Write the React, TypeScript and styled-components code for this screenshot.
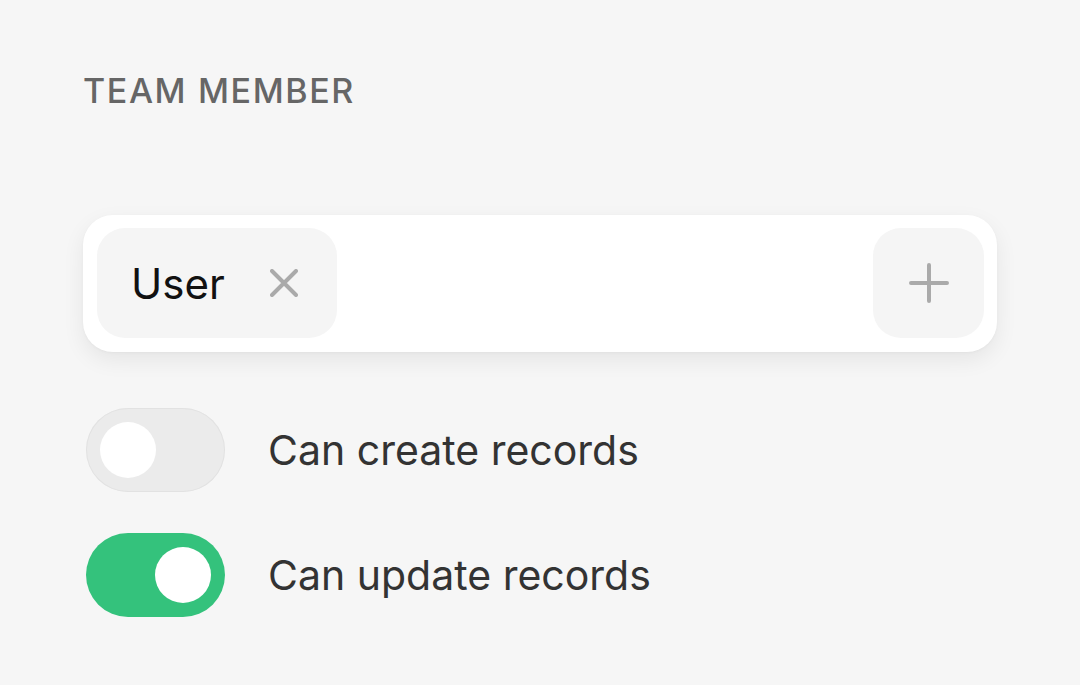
import React from 'react';
import styled, { createGlobalStyle } from 'styled-components';

const GlobalStyle = createGlobalStyle`
  html, body {
    margin: 0;
    padding: 0;
    background: #f6f6f6;
    font-family: Inter, "Noto Sans", "Liberation Sans", sans-serif;
    -webkit-font-smoothing: antialiased;
  }
`;

interface Permission {
  label: string;
  enabled: boolean;
}

const permissions: Permission[] = [
  { label: 'Can create records', enabled: false },
  { label: 'Can update records', enabled: true },
];

const App: React.FC = () => (
  <>
    <GlobalStyle />
    <Page>
      <Heading>TEAM MEMBER</Heading>
      <RoleField>
        <Tag>
          <TagLabel>User</TagLabel>
          <RemoveButton aria-label="Remove">
            <svg width="28" height="28" viewBox="0 0 28 28" fill="none">
              <path d="M2 2L26 26M26 2L2 26" stroke="#aaaaaa" strokeWidth="4" strokeLinecap="round" />
            </svg>
          </RemoveButton>
        </Tag>
        <AddButton aria-label="Add">
          <svg width="40" height="40" viewBox="0 0 40 40" fill="none">
            <path d="M20 2V38M2 20H38" stroke="#aaaaaa" strokeWidth="4" strokeLinecap="round" />
          </svg>
        </AddButton>
      </RoleField>
      <PermissionList>
        {permissions.map(p => (
          <PermissionRow key={p.label}>
            <Switch on={p.enabled}>
              <Knob />
            </Switch>
            <PermissionLabel>{p.label}</PermissionLabel>
          </PermissionRow>
        ))}
      </PermissionList>
    </Page>
  </>
);

export default App;

const Page = styled.div`
  width: 914px;
  padding: 70px 0 0 83px;
`;

const Heading = styled.h2`
  margin: 0;
  font-size: 34px;
  line-height: 42px;
  font-weight: 500;
  letter-spacing: 1.6px;
  color: #666666;
`;

const RoleField = styled.div`
  margin-top: 103px;
  display: flex;
  align-items: center;
  justify-content: space-between;
  padding: 13px 13px 14px 14px;
  background: #ffffff;
  border-radius: 30px;
  box-shadow: 0 8px 22px rgba(0, 0, 0, 0.07), 0 1px 3px rgba(0, 0, 0, 0.03);
`;

const Tag = styled.div`
  display: flex;
  align-items: center;
  gap: 45px;
  height: 110px;
  padding: 0 39px 0 34px;
  box-sizing: border-box;
  background: #f5f5f5;
  border-radius: 28px;
`;

const TagLabel = styled.span`
  font-size: 42px;
  font-weight: 400;
  color: #111111;
`;

const RemoveButton = styled.span`
  display: flex;
  width: 28px;
  height: 28px;
`;

const AddButton = styled.span`
  display: flex;
  align-items: center;
  justify-content: center;
  width: 111px;
  height: 110px;
  background: #f5f5f5;
  border-radius: 28px;
`;

const PermissionList = styled.div`
  margin-top: 56px;
  display: flex;
  flex-direction: column;
  gap: 41px;
`;

const PermissionRow = styled.div`
  display: flex;
  align-items: center;
  gap: 43px;
  padding-left: 3px;
`;

const Knob = styled.span`
  display: block;
  width: 56px;
  height: 56px;
  border-radius: 50%;
  background: #ffffff;
`;

const Switch = styled.span<{ on: boolean }>`
  display: flex;
  justify-content: ${p => (p.on ? 'flex-end' : 'flex-start')};
  align-items: center;
  width: 139px;
  height: 84px;
  padding: 0 14px;
  box-sizing: border-box;
  border-radius: 42px;
  background: ${p => (p.on ? '#34c27c' : '#ebebeb')};
  box-shadow: ${p => (p.on ? 'none' : 'inset 0 0 0 1px #e2e2e2')};
`;

const PermissionLabel = styled.span`
  font-size: 41px;
  color: #333333;
`;
